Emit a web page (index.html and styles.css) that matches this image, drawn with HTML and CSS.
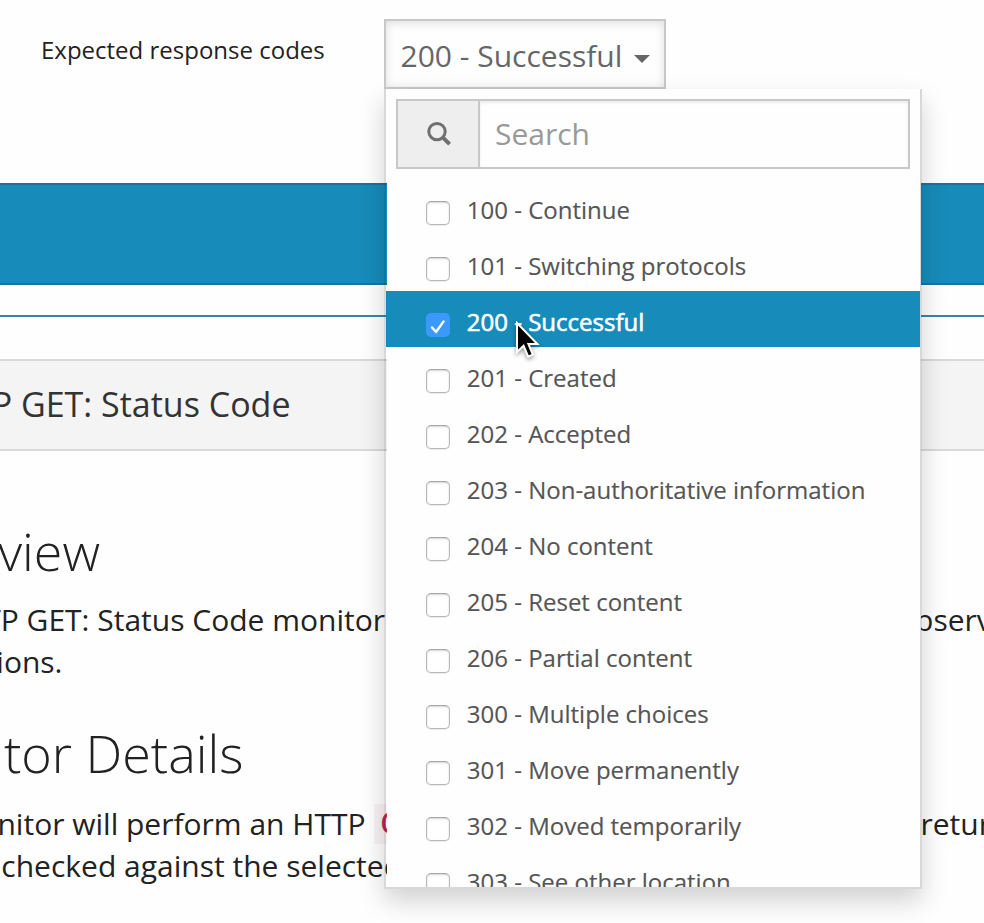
FILE: index.html
```
<!DOCTYPE html>
<html lang="en">
<head>
<meta charset="utf-8">
<title>Expected response codes</title>
<link rel="stylesheet" href="styles.css">
</head>
<body>
<div class="form-row">
  <label class="form-label">Expected response codes</label>
  <div class="select">
    <button class="select-button" type="button"><span class="select-text">200 - Successful</span><span class="caret"></span></button>
    <div class="menu">
      <div class="search">
        <span class="search-addon"><svg width="28" height="28" viewBox="0 0 28 28"><circle cx="12" cy="11.6" r="8.2" fill="none" stroke="#707070" stroke-width="3"/><path d="M18 17.6 24.6 24.2" stroke="#707070" stroke-width="4"/></svg></span>
        <span class="search-input">Search</span>
      </div>
      <ul class="options">
        <li><i class="box"></i><span>100 - Continue</span></li>
        <li><i class="box"></i><span>101 - Switching protocols</span></li>
        <li class="active"><i class="box"><svg width="24" height="24" viewBox="0 0 24 24"><path d="M6 12.4 10 17 17.6 6.4" fill="none" stroke="#fff" stroke-width="2.4" stroke-linecap="round" stroke-linejoin="round"/></svg></i><span>200 - Successful</span></li>
        <li><i class="box"></i><span>201 - Created</span></li>
        <li><i class="box"></i><span>202 - Accepted</span></li>
        <li><i class="box"></i><span>203 - Non-authoritative information</span></li>
        <li><i class="box"></i><span>204 - No content</span></li>
        <li><i class="box"></i><span>205 - Reset content</span></li>
        <li><i class="box"></i><span>206 - Partial content</span></li>
        <li><i class="box"></i><span>300 - Multiple choices</span></li>
        <li><i class="box"></i><span>301 - Move permanently</span></li>
        <li><i class="box"></i><span>302 - Moved temporarily</span></li>
        <li><i class="box"></i><span>303 - See other location</span></li>
      </ul>
    </div>
  </div>
</div>
<div class="banner"></div>
<div class="rule"></div>
<div class="panel-heading"><span class="tail title">P GET: Status Code</span></div>
<div class="content">
  <h2><span class="tail w1">view</span></h2>
  <p><span class="line"><span class="tail w2">TP GET: Status Code monitor</span><span class="right observe">observes</span></span>
  <span class="line"><span class="tail w3">tions.</span></span></p>
  <h2 class="second"><span class="tail w4">itor Details</span></h2>
  <p class="details"><span class="line"><span class="tail w5">nitor will perform an HTTP</span><code>GET</code><span class="right return">return</span></span>
  <span class="line"><span class="tail w6">checked against the selected</span></span></p>
</div>
<svg class="cursor" width="32" height="44" viewBox="0 0 32 44"><path d="M3 2V31L9.6 24.8 14.2 35.6 18.8 33.6 14.4 23H23.4Z" fill="#000" stroke="#fff" stroke-width="2"/></svg>
</body>
</html>
```
FILE: styles.css
```
* { box-sizing: border-box; }
body {
  margin: 0;
  height: 923px;
  overflow: hidden;
  background: #fefefe;
  color: #222;
  font-family: "Open Sans", sans-serif;
  position: relative;
}
.form-row {
  display: flex;
  height: 183px;
  padding-top: 19px;
}
.form-label {
  width: 384px;
  padding: 14px 0 0 41px;
  font-size: 24px;
  line-height: 34px;
}
.select { position: relative; width: 282px; height: 70px; }
.select-button {
  display: flex;
  align-items: center;
  width: 282px;
  height: 70px;
  padding: 3px 0 0 14.5px;
  border: 2px solid #c8c8c8;
  background: #fefefe;
  box-shadow: inset 0 2px 10px rgba(0, 0, 0, .13);
  color: #666;
  font: 30px/42px "Open Sans", sans-serif;
  white-space: nowrap;
}
.caret {
  margin: 6px 0 0 12px;
  border: 8px solid transparent;
  border-top-color: #666;
  border-bottom: 0;
}
.menu {
  position: absolute;
  z-index: 2;
  top: 70px;
  left: 0;
  width: 538px;
  height: 800px;
  padding: 10px;
  border: 2px solid rgba(0, 0, 0, .15);
  border-top: 0;
  background: linear-gradient(#fefefe, #fefefe) 1px 0 / 534px 800px no-repeat;
  box-shadow: 0 12px 24px rgba(0, 0, 0, .175);
  overflow: hidden;
}
.search {
  display: flex;
  height: 70px;
  border: 2px solid #c8c8c8;
  font-size: 30px;
  line-height: 66px;
}
.search-addon {
  display: flex;
  align-items: center;
  justify-content: center;
  width: 82px;
  padding-left: 2px;
  border-right: 2px solid #c8c8c8;
  background: #eee;
}
.search-input {
  flex: 1;
  padding-left: 15px;
  color: #999;
  box-shadow: inset 0 2px 3px rgba(0, 0, 0, .075);
}
.options {
  margin: 10px -10px 0;
  padding: 0;
  list-style: none;
}
.options li {
  display: flex;
  height: 56px;
  padding-left: 40px;
  color: #555;
  font-size: 24px;
  line-height: 34px;
  white-space: nowrap;
}
.options span { margin: 14px 0 0 16.8px; -webkit-text-stroke: .15px #555; }
.options .active { background: #178bb9; color: #fff; }
.options .active span { -webkit-text-stroke: .6px #fff; }
.box {
  width: 24px;
  height: 24px;
  margin-top: 22px;
  border: 1px solid #b8b8b8;
  border-top-color: #a6a6a6;
  border-radius: 5px;
  background: #fff;
  box-shadow: inset 0 1px 2px rgba(0, 0, 0, .18), 0 1px 1px rgba(0, 0, 0, .08);
}
.active .box { border: 0; background: #3b99fc; box-shadow: none; }
.banner {
  height: 102px;
  border: solid #1c7299;
  border-width: 2px 0;
  background: #178bb9;
}
.rule { height: 2px; margin-top: 30px; background: #3a86a5; }
.panel-heading {
  display: flex;
  height: 92px;
  margin-top: 42px;
  border: solid #d9d9d9;
  border-width: 2px 0;
  background: #f4f4f4;
  color: #333;
  font-size: 34px;
  line-height: 86px;
}
.tail, .right {
  display: flex;
  flex: none;
  justify-content: flex-end;
  white-space: nowrap;
}
.title { width: 290.5px; }
.content { padding-top: 64px; }
h2 {
  display: flex;
  margin: 0;
  font-size: 52px;
  font-weight: 300;
  line-height: 72px;
}
.second { margin-top: 34px; }
p { margin: 12px 0 0; font-size: 30px; line-height: 42px; }
p.details { margin-top: 14px; }
.line { display: flex; height: 42px; }
.w1 { width: 100px; }
.w2 { width: 385px; }
.w3 { width: 62.5px; }
.w4 { width: 243.5px; }
.w5 { width: 365.5px; }
.w6 { width: 402px; }
.observe { margin-left: 512px; }
.return { margin-left: 470.5px; }
code {
  flex: none;
  width: 76px;
  height: 40px;
  margin: 1px 0 0 8.5px;
  padding-left: 7px;
  background: #f9f2f4;
  color: #c7254e;
  font: 27px/40px "DejaVu Sans Mono", monospace;
  -webkit-text-stroke: .8px #c7254e;
}
.cursor {
  position: absolute;
  z-index: 3;
  top: 321px;
  left: 514px;
  filter: drop-shadow(0 2px 2px rgba(0, 0, 0, .4));
}
```
